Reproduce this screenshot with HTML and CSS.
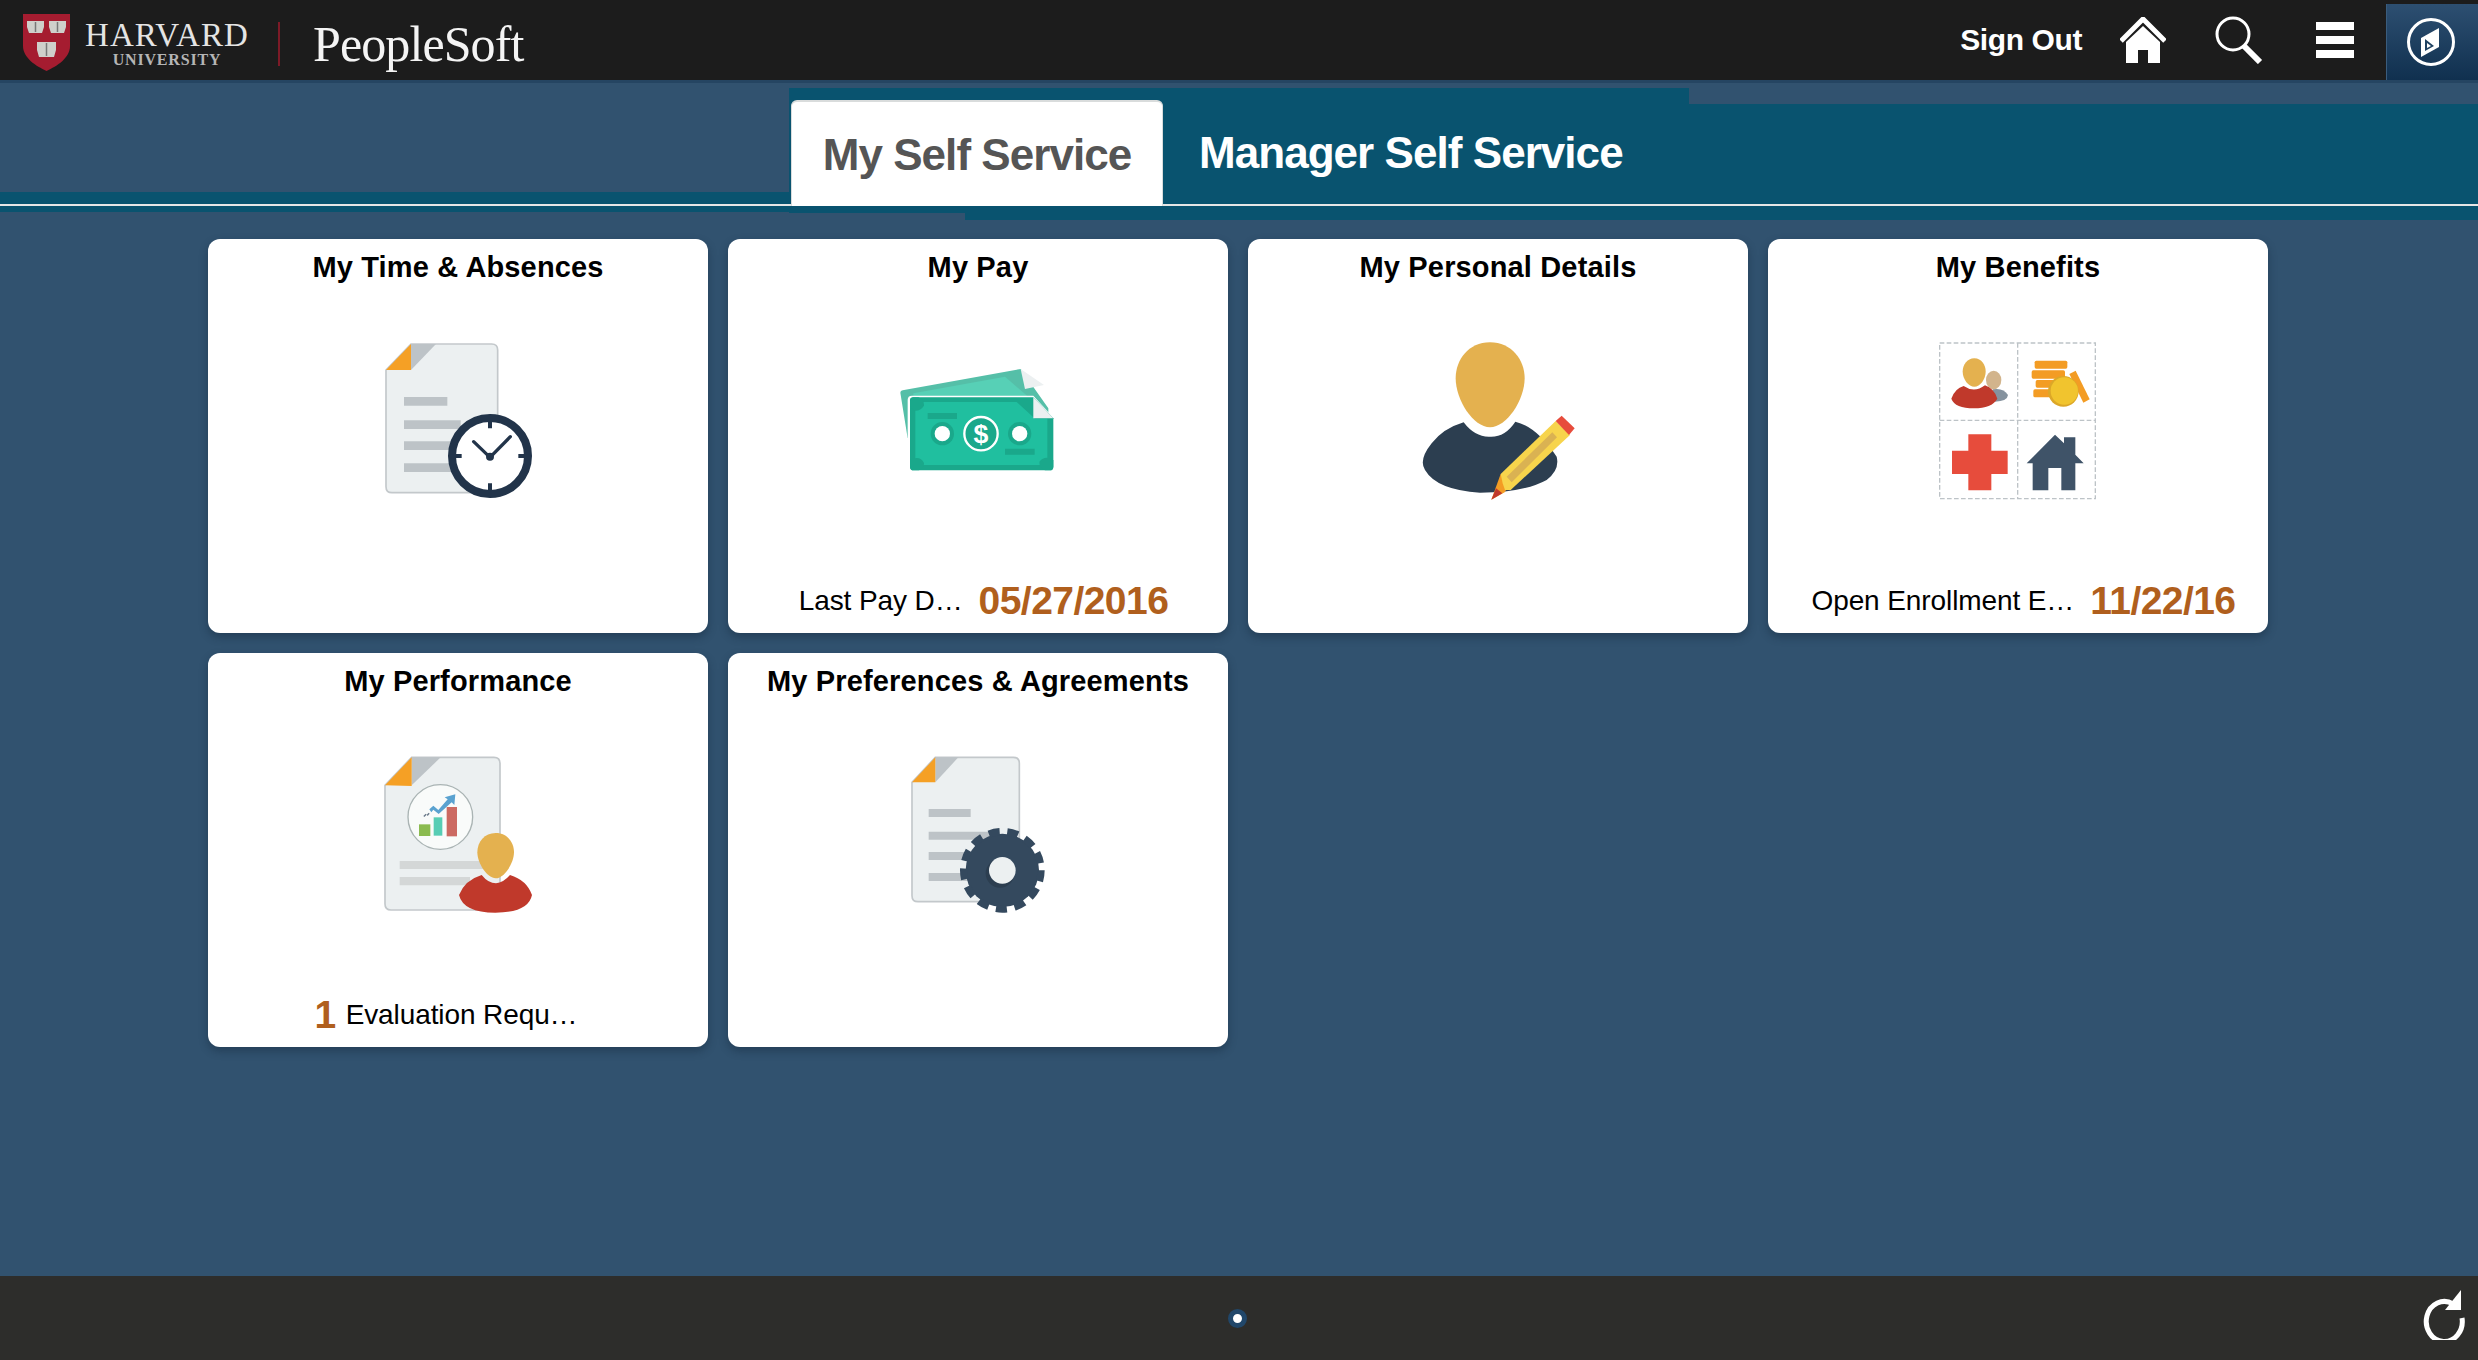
FILE: index.html
```html
<!DOCTYPE html>
<html lang="en">
<head>
<meta charset="utf-8">
<title>My Self Service</title>
<link rel="stylesheet" href="styles.css">
</head>
<body>
<header class="topbar">
  <div class="brand">
    <svg class="shield" viewBox="0 0 47 57"><path d="M0 0H47V32C47 44 34 52 23.500 57C13 52 0 44 0 32Z" fill="#a51c30"/><path d="M4 7H21V13L19 19H6L4 13ZM26 7H43V13L41 19H28L26 13ZM14 28H33V36L31 43H16L14 36Z" fill="#cfcfcb"/><path d="M12.500 8V18M34.500 8V18M23.500 29V42" stroke="#777" stroke-width="1.500"/></svg>
    <div class="wordmark"><span class="wm-top">HARVARD</span><span class="wm-bottom">UNIVERSITY</span></div>
    <span class="brand-rule"></span>
    <span class="product">PeopleSoft</span>
  </div>
  <nav class="actions">
    <a class="signout">Sign Out</a>
    <svg class="home" viewBox="0 0 46 46"><path d="M1 24L23 2L45 24" fill="none" stroke="#fff" stroke-width="5"/><path d="M6 46V25L23 9L40 25V46H28V33H18V46Z" fill="#fff"/></svg>
    <svg class="search" viewBox="0 0 48 48"><circle cx="18" cy="18" r="16" fill="none" stroke="#fff" stroke-width="3"/><path d="M29 30L45 46" stroke="#fff" stroke-width="6"/></svg>
    <div class="burger"><i></i><i></i><i></i></div>
    <div class="navbtn"><svg class="compass" viewBox="0 0 50 50"><circle cx="25" cy="25" r="22.500" fill="none" stroke="#fff" stroke-width="3"/><path d="M15 21L33 11V30L15 40Z" fill="#fff"/><path d="M19 22L28 29L19 34Z" fill="#1e4060"/><path d="M21 26L25 29L21 31Z" fill="#fff"/></svg></div>
  </nav>
</header>
<main class="main">
  <div class="tabbar">
    <span class="band band-top"></span>
    <span class="band band-right"></span>
    <span class="band band-left"></span>
    <span class="band band-under"></span>
    <span class="band-rule"></span>
    <a class="tab tab-active">My Self Service</a>
    <a class="tab">Manager Self Service</a>
  </div>
  <section class="tiles">
    <article class="tile">
      <h2 class="tile-title">My Time &amp; Absences</h2>
      <svg class="tile-icon" viewBox="0 0 720 600"><g transform="translate(9 0)">
        <path class="doc" d="M135 150L210 72H452Q470 72 470 90V500Q470 518 452 518H153Q135 518 135 500Z"/>
        <path class="fold" d="M210 72H285L210 150Z"/><path class="corner" d="M135 150L210 72V150Z"/>
        <path class="line" d="M189 231h130v26h-130zM189 301h170v26h-170zM189 364h150v26h-150zM189 430h150v26h-150z"/>
        <circle cx="447" cy="408" r="114" fill="#fff" stroke="#22344a" stroke-width="24"/>
        <path d="M398 365L447 412L508 350" fill="none" stroke="#22344a" stroke-width="10" stroke-linecap="round" stroke-linejoin="round"/>
        <circle cx="447" cy="410" r="12" fill="#22344a"/>
        <path d="M441 305h12v20h-12zM441 490h12v20h-12zM344 402h18v12h-18zM532 402h18v12h-18z" fill="#22344a"/>
      </g></svg>
    </article>
    <article class="tile">
      <h2 class="tile-title">My Pay</h2>
      <svg class="tile-icon" viewBox="0 0 720 600"><g transform="translate(36 60)">
        <path d="M91 158Q91 152 98 151L452 87L535 205V260H135L113 295Z" fill="#55bfa8"/>
        <path d="M130 160L405 110L480 175H130Z" fill="#57d0b6"/>
        <path d="M452 87L522 135L465 147Z" fill="#ecf0f1"/>
        <path d="M113 180Q113 167 126 167H490L552 235V300H113Z" fill="#fff"/>
        <path d="M120 182Q120 172 130 172H490L550 235V380Q550 391 539 391H131Q120 391 120 380Z" fill="#1aa88b"/>
        <path d="M136 186H440L495 236H532V375H136Z" fill="#20bf9f"/>
        <path d="M120 197V183Q120 172 131 172H145Q163 178 162 197Q150 215 132 212ZM120 360Q150 345 162 369Q163 385 147 391H131Q120 391 120 380ZM550 360V380Q550 391 539 391H525Q505 383 509 364Q525 345 550 360Z" fill="#1aa88b"/>
        <path d="M490 172L550 235H490Z" fill="#ecf0f1"/>
        <path d="M173 219h88v18h-88zM405 326h89v18h-89z" fill="#1aa88b"/>
        <circle cx="217" cy="281" r="35" fill="#1aa88b"/><circle cx="217" cy="281" r="23" fill="#fff"/>
        <circle cx="449" cy="281" r="35" fill="#1aa88b"/><circle cx="449" cy="281" r="23" fill="#fff"/>
        <circle cx="333" cy="281" r="50" fill="#1aa88b" stroke="#fff" stroke-width="7"/>
        <text x="333" y="309" text-anchor="middle" class="dollar">$</text>
      </g></svg>
      <p class="tile-foot foot-offset"><span class="foot-label">Last Pay D…</span><span class="foot-value">05/27/2016</span></p>
    </article>
    <article class="tile">
      <h2 class="tile-title">My Personal Details</h2>
      <svg class="tile-icon" viewBox="0 0 720 600"><g transform="translate(36 0)">
        <path d="M221 307Q255 352 300 350Q345 352 376 305Q440 320 500 410Q510 450 470 480Q400 518 270 518Q140 510 105 450Q85 420 125 370Q160 325 221 307Z" fill="#2c3e50"/>
        <path d="M300 67C365 67 404 120 404 175C404 240 350 322 300 322C250 322 197 240 197 175C197 120 235 67 300 67Z" fill="#e4b14f"/>
        <path d="M304 539L332 462L360 492L344 517Z" fill="#f39c24"/>
        <path d="M304 539L318 505L337 520Z" fill="#c0392b"/>
        <path d="M332 462L497 303L540 345L362 510L345 510L338 490Z" fill="#f7d44c"/>
        <path d="M350 470L487 337L501 352L365 487Z" fill="#dab252"/>
        <path d="M497 303L515 287L554 325L537 345Z" fill="#e74c3c"/>
      </g></svg>
    </article>
    <article class="tile">
      <h2 class="tile-title">My Benefits</h2>
      <svg class="tile-icon" viewBox="0 0 720 600"><g transform="translate(66 30)">
        <path d="M59 39H526V506H59ZM293 39V506M59 271H526" fill="none" stroke="#bdc3c7" stroke-width="4" stroke-dasharray="14 7"/>
        <path d="M218 178Q250 172 264 195Q262 214 225 215Z" fill="#85929e"/>
        <ellipse cx="221" cy="150" rx="23" ry="28" fill="#d2b48c"/>
        <path d="M131 168Q163 190 195 166Q222 175 232 206Q215 235 162 235Q105 235 94 206Q105 175 131 168Z" fill="#c0392b"/>
        <path d="M163 85C185 85 197 105 197 125C197 148 180 170 163 170C146 170 128 148 128 125C128 105 141 85 163 85Z" fill="#e4b14f"/>
        <rect x="344" y="92" width="98" height="24" rx="5" fill="#f39c24"/>
        <rect x="335" y="121" width="100" height="25" rx="5" fill="#f39c24"/>
        <rect x="347" y="150" width="80" height="23" rx="5" fill="#f39c24"/>
        <rect x="340" y="178" width="80" height="24" rx="5" fill="#f39c24"/>
        <path d="M448 132L467 122L509 208L490 218Z" fill="#f39c24"/>
        <circle cx="430" cy="184" r="46" fill="#dca728"/>
        <circle cx="433" cy="183" r="41" fill="#f1c42e"/>
        <path d="M145 313H214V362H263V432H214V481H145V432H96V362H145Z" fill="#e74c3c"/>
        <path d="M320 400L405 314L432 340V322H466V374L491 400H466V481H424V414H385V481H338V400Z" fill="#3f5368"/>
      </g></svg>
      <p class="tile-foot foot-offset"><span class="foot-label">Open Enrollment E…</span><span class="foot-value">11/22/16</span></p>
    </article>
    <article class="tile">
      <h2 class="tile-title">My Performance</h2>
      <svg class="tile-icon" viewBox="0 0 720 600"><g transform="translate(96 18)">
        <path class="doc" d="M45 136L125 52H372Q390 52 390 70V492Q390 510 372 510H63Q45 510 45 492Z"/>
        <path class="fold" d="M125 52H212L125 136Z"/><path class="corner" d="M45 136L125 52V138Z"/>
        <circle cx="211" cy="231" r="97" fill="#f9fbfa" stroke="#aab4b4" stroke-width="4"/>
        <path d="M147 253h34v35h-34z" fill="#8bbb50"/><path d="M191 232h26v55h-26z" fill="#57cdb4"/><path d="M230 201h31v88h-31z" fill="#cc6a62"/>
        <path d="M178 208L190 197L205 210L233 178L224 172L256 163L253 195L245 187L206 222L190 209L184 217Z" fill="#5aa2d0"/>
        <path d="M160 228l7-7 3 3-7 7zM170 224l6-6 3 3-6 7z" fill="#6b7a8a"/>
        <path d="M89 363H340V387H89ZM89 411H300V436H89Z" fill="#d4d7d7"/>
        <path d="M335 405Q355 430 378 430Q400 428 420 405Q470 420 486 465Q475 518 376 518Q280 518 267 465Q285 420 335 405Z" fill="#c0392b"/>
        <path d="M377 279C410 279 432 305 432 337C432 370 402 415 377 415C352 415 322 370 322 337C322 305 344 279 377 279Z" fill="#e4b14f"/>
      </g></svg>
      <p class="tile-foot foot-count-row"><span class="foot-value">1</span><span class="foot-label">Evaluation Requ…</span></p>
    </article>
    <article class="tile">
      <h2 class="tile-title">My Preferences &amp; Agreements</h2>
      <svg class="tile-icon" viewBox="0 0 720 600"><g transform="translate(96 18)">
        <path class="doc" d="M66 127L136 52H370Q388 52 388 70V467Q388 485 370 485H84Q66 485 66 467Z"/>
        <path class="fold" d="M136 52H205L136 127Z"/><path class="corner" d="M66 127L136 52V127Z"/>
        <path class="line" d="M116 207h126v24h-126zM116 275h210v24h-210zM116 336h140v24h-140zM116 399h222v24h-222z"/>
        <circle cx="337" cy="391" r="110" fill="#34495e"/>
        <circle cx="337" cy="391" r="116" fill="none" stroke="#34495e" stroke-width="22" stroke-dasharray="33 23.070"/>
        <circle cx="330" cy="400" r="43" fill="#2c3e50"/>
        <circle cx="337" cy="391" r="40" fill="#ecf0f1"/>
      </g></svg>
    </article>
  </section>
</main>
<footer class="footbar">
  <span class="pager-dot"></span>
  <svg class="refresh" viewBox="0 0 44 50"><path d="M32 14A18 20 0 1 0 41 28" fill="none" stroke="#fff" stroke-width="5"/><path d="M40 0V20H24Z" fill="#fff"/></svg>
</footer>
</body>
</html>
```
FILE: styles.css
```css
* { box-sizing: border-box; }
html, body { height: 100%; }
body {
  margin: 0;
  display: flex;
  flex-direction: column;
  background: #31526f;
  font-family: "Liberation Sans", Arial, sans-serif;
  color: #000;
  overflow: hidden;
}

/* top bar */
.topbar {
  flex: none;
  height: 83px;
  display: flex;
  justify-content: space-between;
  background: #1c1c1c;
  border-bottom: 3px solid #254562;
}
.brand { display: flex; align-items: center; padding-left: 23px; }
.shield { width: 47px; height: 57px; margin-top: 4px; }
.wordmark {
  display: flex;
  flex-direction: column;
  align-items: center;
  width: 166px;
  margin-left: 14px;
  padding-top: 7px;
  font-family: "Liberation Serif", serif;
  color: #e4e4e4;
  line-height: 1;
}
.wm-top { font-size: 33px; letter-spacing: 1.1px; }
.wm-bottom { font-size: 16px; font-weight: bold; letter-spacing: .8px; color: #b5b5b5; }
.brand-rule { width: 2px; height: 44px; margin: 8px 0 0 28px; background: #7d1a27; }
.product { margin-left: 33px; padding-top: 7px; font-family: "Liberation Serif", serif; font-size: 50px; color: #f4f4f4; letter-spacing: -.9px; }
.actions { display: flex; align-items: center; }
.signout { font-size: 30px; font-weight: bold; color: #fff; letter-spacing: -.4px; }
.home { width: 46px; height: 46px; margin-left: 38px; }
.search { width: 48px; height: 48px; margin-left: 49px; }
.burger { display: flex; flex-direction: column; gap: 6px; width: 38px; margin-left: 53px; }
.burger i { display: block; height: 8px; background: #fff; }
.navbtn {
  display: flex;
  align-items: center;
  justify-content: center;
  width: 92px;
  height: 76px;
  margin: 4px 0 0 32px;
  padding-right: 3px;
  background: linear-gradient(#2d4f71, #10304f);
  border-left: 1px solid #3a5c7d;
}
.compass { width: 50px; height: 50px; }

/* tabs */
.main { flex: 1; min-height: 0; }
.tabbar { position: relative; display: flex; height: 156px; padding: 17px 0 0 791px; }
.band { position: absolute; background: #09536f; }
.band-top { left: 789px; top: 5px; width: 900px; height: 125px; }
.band-right { left: 1689px; right: 0; top: 21px; height: 116px; }
.band-left { left: 0; top: 109px; width: 789px; height: 20px; }
.band-under { left: 965px; right: 0; top: 125px; height: 12px; }
.band-rule { position: absolute; left: 0; right: 0; top: 121px; height: 2px; background: #e6e6e6; }
.tab {
  position: relative;
  height: 106px;
  padding: 0 36px;
  font-size: 44px;
  line-height: 106px;
  font-weight: bold;
  color: #fff;
  letter-spacing: -.95px;
}
.tab-active {
  width: 372px;
  padding: 0;
  text-align: center;
  background: #fff;
  color: #555;
  border-radius: 6px 6px 0 0;
  border: solid #d9dcdc;
  border-width: 2px 1px 0;
}

/* tiles */
.tiles {
  display: grid;
  grid-template-columns: repeat(4, 500px);
  grid-auto-rows: 394px;
  gap: 20px;
  padding-left: 208px;
}
.tile {
  display: flex;
  flex-direction: column;
  align-items: center;
  background: #fff;
  border-radius: 12px;
  box-shadow: 0 4px 8px rgba(20, 40, 60, .45);
}
.tile-title { margin: 8px 0 0; font-size: 29px; line-height: 40px; font-weight: bold; letter-spacing: .15px; }
.tile-icon { flex: none; width: 240px; height: 200px; margin-top: 33px; }
.tile-foot { display: flex; align-items: center; gap: 16px; margin: auto 0 10px; white-space: nowrap; }
.foot-offset { padding-left: 11px; }
.foot-count-row { gap: 10px; padding-right: 24px; }
.foot-label { font-size: 28px; letter-spacing: -.1px; }
.foot-value { font-size: 39px; font-weight: bold; color: #b05f1d; letter-spacing: -.55px; }

/* icon parts */
.doc { fill: #ecf0f1; stroke: #c3c8cb; stroke-width: 5; }
.fold { fill: #bdc3c7; }
.corner { fill: #f5a025; }
.line { fill: #bdc3c7; }
.dollar { font-size: 80px; font-weight: bold; fill: #fff; font-family: "Liberation Sans", sans-serif; }

/* footer */
.footbar {
  flex: none;
  position: relative;
  display: flex;
  align-items: center;
  justify-content: center;
  height: 84px;
  background: #2d2d2b;
}
.pager-dot { width: 19px; height: 19px; border-radius: 50%; background: #fff; border: 5px solid #21476a; margin-left: -4px; }
.refresh { position: absolute; right: 13px; top: 14px; width: 44px; height: 50px; }
```
